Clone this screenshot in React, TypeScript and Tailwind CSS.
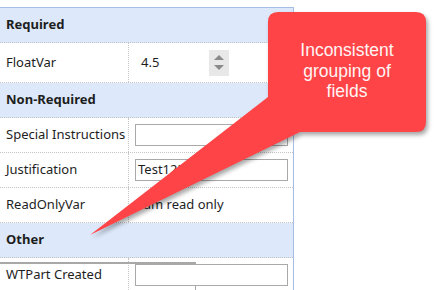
const rowLine = 'border-b border-dotted border-[#c4c4c4]'

function GroupRow({ label }: { label: string }) {
  return (
    <div className={`flex h-[35px] items-center bg-[#dde9fb] pl-[6px] font-bold ${rowLine}`}>
      {label}
    </div>
  )
}

function FieldRow({
  label,
  height = 'h-[35px]',
  children,
}: {
  label: string
  height?: string
  children?: React.ReactNode
}) {
  return (
    <div className={`flex ${height} ${rowLine}`}>
      <div className="flex w-[129px] shrink-0 items-center border-r border-dotted border-[#c4c4c4] pl-[6px]">
        {label}
      </div>
      <div className="flex flex-1 items-center pl-[6px] pr-[5px]">{children}</div>
    </div>
  )
}

function TextBox({ value = '' }: { value?: string }) {
  return (
    <div className="flex h-[22px] w-full items-center border border-[#a9a9a9] bg-white pl-[2px]">
      {value}
    </div>
  )
}

function Callout() {
  return (
    <>
      <svg
        className="absolute left-0 top-0"
        width="437"
        height="290"
        style={{ filter: 'drop-shadow(2px 3px 2px rgba(0,0,0,0.35))' }}
      >
        <path
          d="M278 12 H416 Q426 12 426 22 V122 Q426 132 416 132 H300 L90 235 L268 97 V22 Q268 12 278 12 Z"
          fill="#ff4447"
        />
      </svg>
      <div className="absolute left-[268px] top-[40px] w-[158px] text-center font-['Liberation_Sans',Arial,sans-serif] text-[17.5px] leading-[20.5px] text-[#fff4f4]">
        Inconsistent
        <br />
        grouping of
        <br />
        fields
      </div>
    </>
  )
}

export default function App() {
  return (
    <div className="relative h-[290px] w-[437px] overflow-hidden bg-white font-['Noto_Sans',sans-serif] text-[13px] text-[#1e1e1e]">
      <div className="mt-[7px] w-[294px] border-r border-t border-[#a6bee6]">
        <GroupRow label="Required" />
        <FieldRow label="FloatVar" height="h-[40px]">
          <div className="flex w-full items-center">
            <span className="pl-[6px]">4.5</span>
            <div className="ml-[50px] flex h-[26px] w-[20px] flex-col items-center justify-center gap-[5px] bg-[#e8e8e8]">
              <div className="h-0 w-0 border-x-[5px] border-b-[5px] border-x-transparent border-b-[#8a8a8a]" />
              <div className="h-0 w-0 border-x-[5px] border-t-[5px] border-x-transparent border-t-[#8a8a8a]" />
            </div>
          </div>
        </FieldRow>
        <GroupRow label="Non-Required" />
        <FieldRow label="Special Instructions">
          <TextBox />
        </FieldRow>
        <FieldRow label="Justification">
          <TextBox value="Test123" />
        </FieldRow>
        <FieldRow label="ReadOnlyVar">
          <span className="pl-[1px]">I am read only</span>
        </FieldRow>
        <GroupRow label="Other" />
        <FieldRow label="WTPart Created">
          <TextBox />
        </FieldRow>
      </div>

      {/* stray separator overlay under the last group */}
      <div className="absolute left-0 top-[262px] h-[2px] w-[196px] bg-[#a8a8a8]" />
      <div className="absolute left-[195px] top-[285px] h-[5px] w-[1px] bg-[#a8a8a8]" />

      <Callout />
    </div>
  )
}
